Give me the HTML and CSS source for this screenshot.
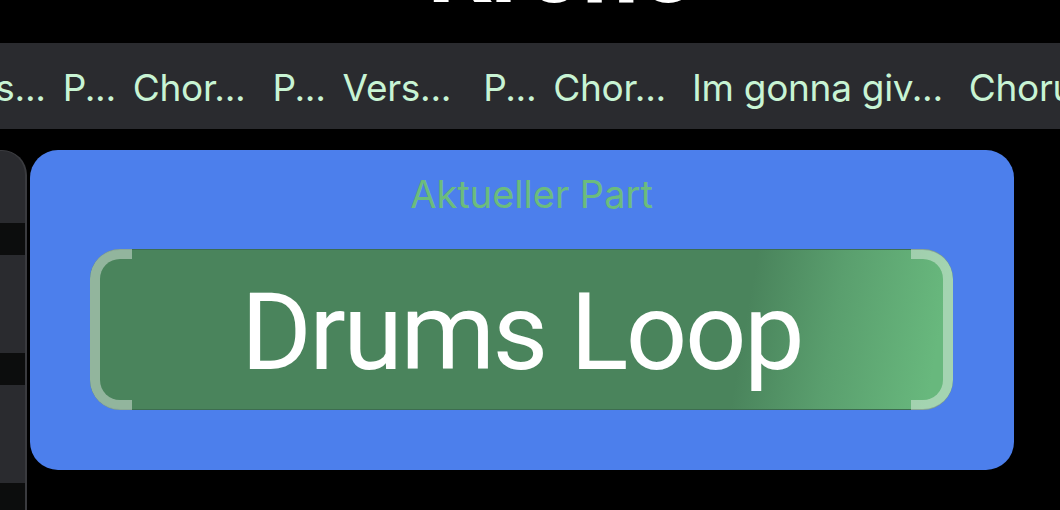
FILE: index.html
```html
<!DOCTYPE html>
<html lang="de">
<head>
<meta charset="utf-8">
<title>Aktueller Part</title>
<link rel="stylesheet" href="styles.css">
</head>
<body>
  <header class="top">
    <h1 class="title">Krone</h1>
  </header>
  <nav class="strip">
    <span class="part">Ps...</span>
    <span class="part">P...</span>
    <span class="part sp-m">Chor...</span>
    <span class="part">P...</span>
    <span class="part sp-l">Vers...</span>
    <span class="part">P...</span>
    <span class="part sp-s">Chor...</span>
    <span class="part sp-s">Im gonna giv...</span>
    <span class="part">Chorus</span>
  </nav>
  <main class="main">
    <aside class="side">
      <div class="row first"></div>
      <div class="gap"></div>
      <div class="row"></div>
      <div class="gap"></div>
      <div class="row"></div>
      <div class="gap"></div>
    </aside>
    <section class="card">
      <div class="label">Aktueller Part</div>
      <div class="current">
        <span class="name">Drums Loop</span>
      </div>
    </section>
  </main>
</body>
</html>
```
FILE: styles.css
```css
* { box-sizing: border-box; }
html, body { margin: 0; padding: 0; }
body {
  width: 1060px;
  height: 510px;
  overflow: hidden;
  background: #000;
  font-family: Inter, Roboto, "Liberation Sans", sans-serif;
}
.top {
  height: 43px;
  overflow: hidden;
  text-align: center;
}
.title {
  margin: -82px 0 0 60px;
  font-family: Roboto, sans-serif;
  font-size: 100px;
  line-height: 100px;
  font-weight: 700;
  color: #fff;
}
.strip {
  height: 86px;
  background: #2a2b2f;
  display: flex;
  align-items: center;
  gap: 17px;
  white-space: nowrap;
  overflow: hidden;
  margin-left: -28px;
}
.part {
  font-size: 37px;
  color: #c8f4d4;
  flex: none;
  padding-top: 2px;
  letter-spacing: -0.3px;
}
.part.sp-s { margin-right: 9px; }
.part.sp-m { margin-right: 10px; }
.part.sp-l { margin-right: 15px; }
.main {
  display: flex;
  padding-top: 21px;
}
.side {
  width: 27px;
  height: 360px;
  flex: none;
  background: #2a2b2f;
  border-right: 2px solid #3a3b3f;
  border-top: 1px solid #3a3b3f;
  border-top-right-radius: 25px;
  display: flex;
  flex-direction: column;
  overflow: hidden;
}
.row { height: 98px; flex: none; }
.row.first { height: 72px; }
.gap { height: 32px; flex: none; background: #0c0d0d; }
.card {
  margin-left: 3px;
  width: 984px;
  height: 320px;
  background: #4c7fec;
  border-radius: 28px;
  padding: 22px 61px 0 60px;
  display: flex;
  flex-direction: column;
  align-items: stretch;
}
.label {
  text-align: center;
  font-size: 38px;
  line-height: 44px;
  color: #6cbc7c;
  padding-left: 20px;
}
.current {
  position: relative;
  margin-top: 33px;
  height: 161px;
  border-radius: 30px;
  border-top: 1px solid #3d6d50;
  border-bottom: 1px solid #3d6d50;
  background: linear-gradient(100deg, #4a845c 0%, #4a845c 75%, #5a9f6e 85%, #68b87d 97%);
  display: flex;
  align-items: center;
  justify-content: center;
}
.current::before,
.current::after {
  content: "";
  position: absolute;
  top: -1px;
  bottom: -1px;
  width: 32px;
  border: 10px solid rgba(255, 255, 255, 0.4);
}
.current::before {
  left: 0;
  border-right: none;
  border-radius: 30px 0 0 30px;
}
.current::after {
  right: 0;
  border-left: none;
  border-radius: 0 30px 30px 0;
}
.name {
  font-family: Roboto, sans-serif;
  font-size: 108px;
  line-height: 1;
  letter-spacing: -2.5px;
  color: #fff;
  padding-top: 4px;
}
```
